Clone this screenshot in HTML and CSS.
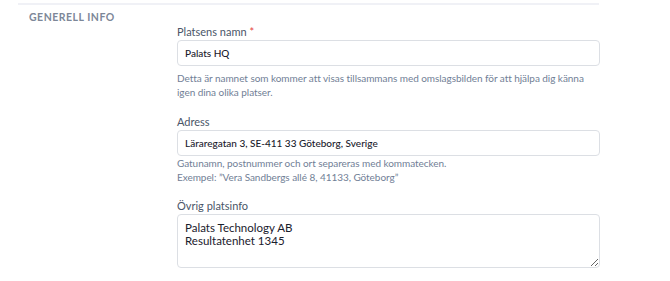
FILE: index.html
```html
<!DOCTYPE html>
<html lang="sv">
<head>
    <meta charset="UTF-8">
    <meta name="viewport" content="width=device-width, initial-scale=1.0">
    <title>Generell info</title>
    <link rel="stylesheet" href="styles.css">
</head>
<body>
    <div class="divider"></div>
    <section class="settings-section">
        <h2 class="section-title">Generell info</h2>
        <div class="section-fields">
            <div class="field">
                <label class="field-label" for="name">Platsens namn <span class="required">*</span></label>
                <input class="field-input" id="name" type="text" value="Palats HQ">
                <p class="field-help help-spaced">Detta är namnet som kommer att visas tillsammans med omslagsbilden för att hjälpa dig känna igen dina olika platser.</p>
            </div>
            <div class="field">
                <label class="field-label" for="address">Adress</label>
                <input class="field-input" id="address" type="text" value="Läraregatan 3, SE-411 33 Göteborg, Sverige">
                <p class="field-help">Gatunamn, postnummer och ort separeras med kommatecken.<br>Exempel: ”Vera Sandbergs allé 8, 41133, Göteborg”</p>
            </div>
            <div class="field">
                <label class="field-label" for="info">Övrig platsinfo</label>
                <textarea class="field-input field-textarea" id="info">Palats Technology AB
Resultatenhet 1345</textarea>
            </div>
        </div>
    </section>
</body>
</html>
```

FILE: styles.css
```css
body {
    margin: 0;
    background: #ffffff;
    font-family: Lato, "Noto Sans", sans-serif;
    color: #2d3748;
    overflow: hidden;
}

.divider {
    margin: 3px 71px 0 18px;
    height: 2px;
    background: #f0f1f6;
}

.settings-section {
    display: flex;
    padding: 5px 0 0 29px;
}

.section-title {
    width: 148px;
    margin: 0;
    font-size: 10.5px;
    line-height: 14px;
    font-weight: 700;
    letter-spacing: 0.5px;
    text-transform: uppercase;
    color: #7d8798;
}

.section-fields {
    width: 423px;
    padding-top: 15px;
}

.field {
    margin-bottom: 16px;
}

.field:nth-child(2) {
    margin-bottom: 15px;
}

.field-label {
    display: block;
    font-size: 11px;
    line-height: 14px;
    color: #4a5568;
    margin-bottom: 1px;
}

.required {
    color: #e53e3e;
}

.field-input {
    display: block;
    box-sizing: border-box;
    width: 100%;
    height: 26px;
    padding: 0 7px;
    border: 1px solid #dcdfe4;
    border-radius: 4px;
    font-family: inherit;
    font-size: 10px;
    font-weight: 500;
    color: #1a202c;
    background: #ffffff;
}

.field-textarea {
    height: 54px;
    padding: 6px 7px;
    font-size: 11.5px;
    line-height: 13px;
    font-weight: 400;
    resize: vertical;
}

.field-help {
    margin: 0;
    font-size: 10px;
    line-height: 14px;
    letter-spacing: -0.05px;
    color: #718096;
}

.help-spaced {
    margin-top: 5px;
}
```
